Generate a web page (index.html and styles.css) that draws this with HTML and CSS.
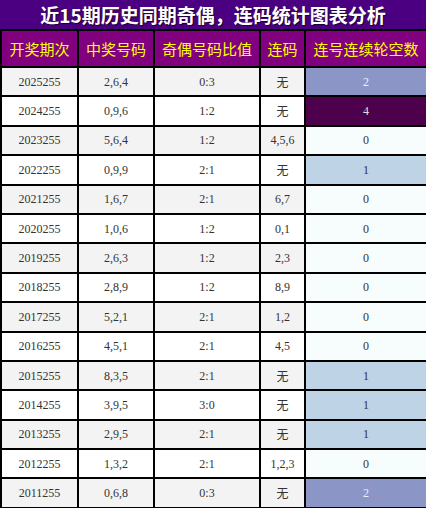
FILE: index.html
```html
<!DOCTYPE html>
<html lang="zh">
<head>
    <meta charset="UTF-8">
    <meta name="viewport" content="width=device-width, initial-scale=1.0">
    <title>近15期历史同期奇偶，连码统计图表分析</title>
    <link rel="stylesheet" href="styles.css">
</head>
<body>
    <div class="tabla">
        <div class="titulo">近15期历史同期奇偶，连码统计图表分析</div>
        <table>
            <colgroup>
                <col class="c1">
                <col class="c2">
                <col class="c3">
                <col class="c4">
                <col class="c5">
            </colgroup>
            <thead>
                <tr>
                    <th>开奖期次</th>
                    <th>中奖号码</th>
                    <th>奇偶号码比值</th>
                    <th>连码</th>
                    <th>连号连续轮空数</th>
                </tr>
            </thead>
            <tbody>
                <tr><td>2025255</td><td>2,6,4</td><td>0:3</td><td class="cjk">无</td><td class="v2">2</td></tr>
                <tr><td>2024255</td><td>0,9,6</td><td>1:2</td><td class="cjk">无</td><td class="v4">4</td></tr>
                <tr><td>2023255</td><td>5,6,4</td><td>1:2</td><td>4,5,6</td><td class="v0">0</td></tr>
                <tr><td>2022255</td><td>0,9,9</td><td>2:1</td><td class="cjk">无</td><td class="v1">1</td></tr>
                <tr><td>2021255</td><td>1,6,7</td><td>2:1</td><td>6,7</td><td class="v0">0</td></tr>
                <tr><td>2020255</td><td>1,0,6</td><td>1:2</td><td>0,1</td><td class="v0">0</td></tr>
                <tr><td>2019255</td><td>2,6,3</td><td>1:2</td><td>2,3</td><td class="v0">0</td></tr>
                <tr><td>2018255</td><td>2,8,9</td><td>1:2</td><td>8,9</td><td class="v0">0</td></tr>
                <tr><td>2017255</td><td>5,2,1</td><td>2:1</td><td>1,2</td><td class="v0">0</td></tr>
                <tr><td>2016255</td><td>4,5,1</td><td>2:1</td><td>4,5</td><td class="v0">0</td></tr>
                <tr><td>2015255</td><td>8,3,5</td><td>2:1</td><td class="cjk">无</td><td class="v1">1</td></tr>
                <tr><td>2014255</td><td>3,9,5</td><td>3:0</td><td class="cjk">无</td><td class="v1">1</td></tr>
                <tr><td>2013255</td><td>2,9,5</td><td>2:1</td><td class="cjk">无</td><td class="v1">1</td></tr>
                <tr><td>2012255</td><td>1,3,2</td><td>2:1</td><td>1,2,3</td><td class="v0">0</td></tr>
                <tr><td>2011255</td><td>0,6,8</td><td>0:3</td><td class="cjk">无</td><td class="v2">2</td></tr>
            </tbody>
        </table>
    </div>
</body>
</html>
```

FILE: styles.css
```css
body {
    margin: 0;
    background: white;
    font-family: "Liberation Serif", "Noto Sans CJK SC", serif;
}
.tabla {
    width: 426px;
}
.titulo {
    height: 29px;
    line-height: 29px;
    background-color: #4b0082;
    color: white;
    font-family: "Noto Sans CJK SC", sans-serif;
    font-weight: bold;
    font-size: 19px;
    text-align: center;
    text-shadow: 1px 1px 1px #1a0033;
}
table {
    width: 426px;
    border-collapse: collapse;
    table-layout: fixed;
}
.c1 { width: 77px; }
.c2 { width: 76px; }
.c3 { width: 106px; }
.c4 { width: 45px; }
.c5 { width: 122px; }
th, td {
    border: 2px solid black;
    text-align: center;
    padding: 0;
    line-height: 16px;
}
th {
    height: 35px;
    background-color: #800080;
    color: #ffff00;
    font-family: "Noto Sans CJK SC", sans-serif;
    font-weight: normal;
    font-size: 15px;
}
td {
    height: 27.4px;
    font-size: 12px;
    color: #333;
}
tbody tr:nth-child(odd) td {
    background-color: #f3f3f3;
}
tbody tr:nth-child(even) td {
    background-color: white;
}
td.cjk {
    font-family: "Noto Sans CJK SC", sans-serif;
    font-size: 12px;
}
tbody tr td.v0 {
    background-color: #f7fcfd;
}
tbody tr td.v1 {
    background-color: #bfd3e6;
}
tbody tr td.v2 {
    background-color: #8c96c6;
    color: #eef;
}
tbody tr td.v4 {
    background-color: #4d004b;
    color: #ddd;
}
```
